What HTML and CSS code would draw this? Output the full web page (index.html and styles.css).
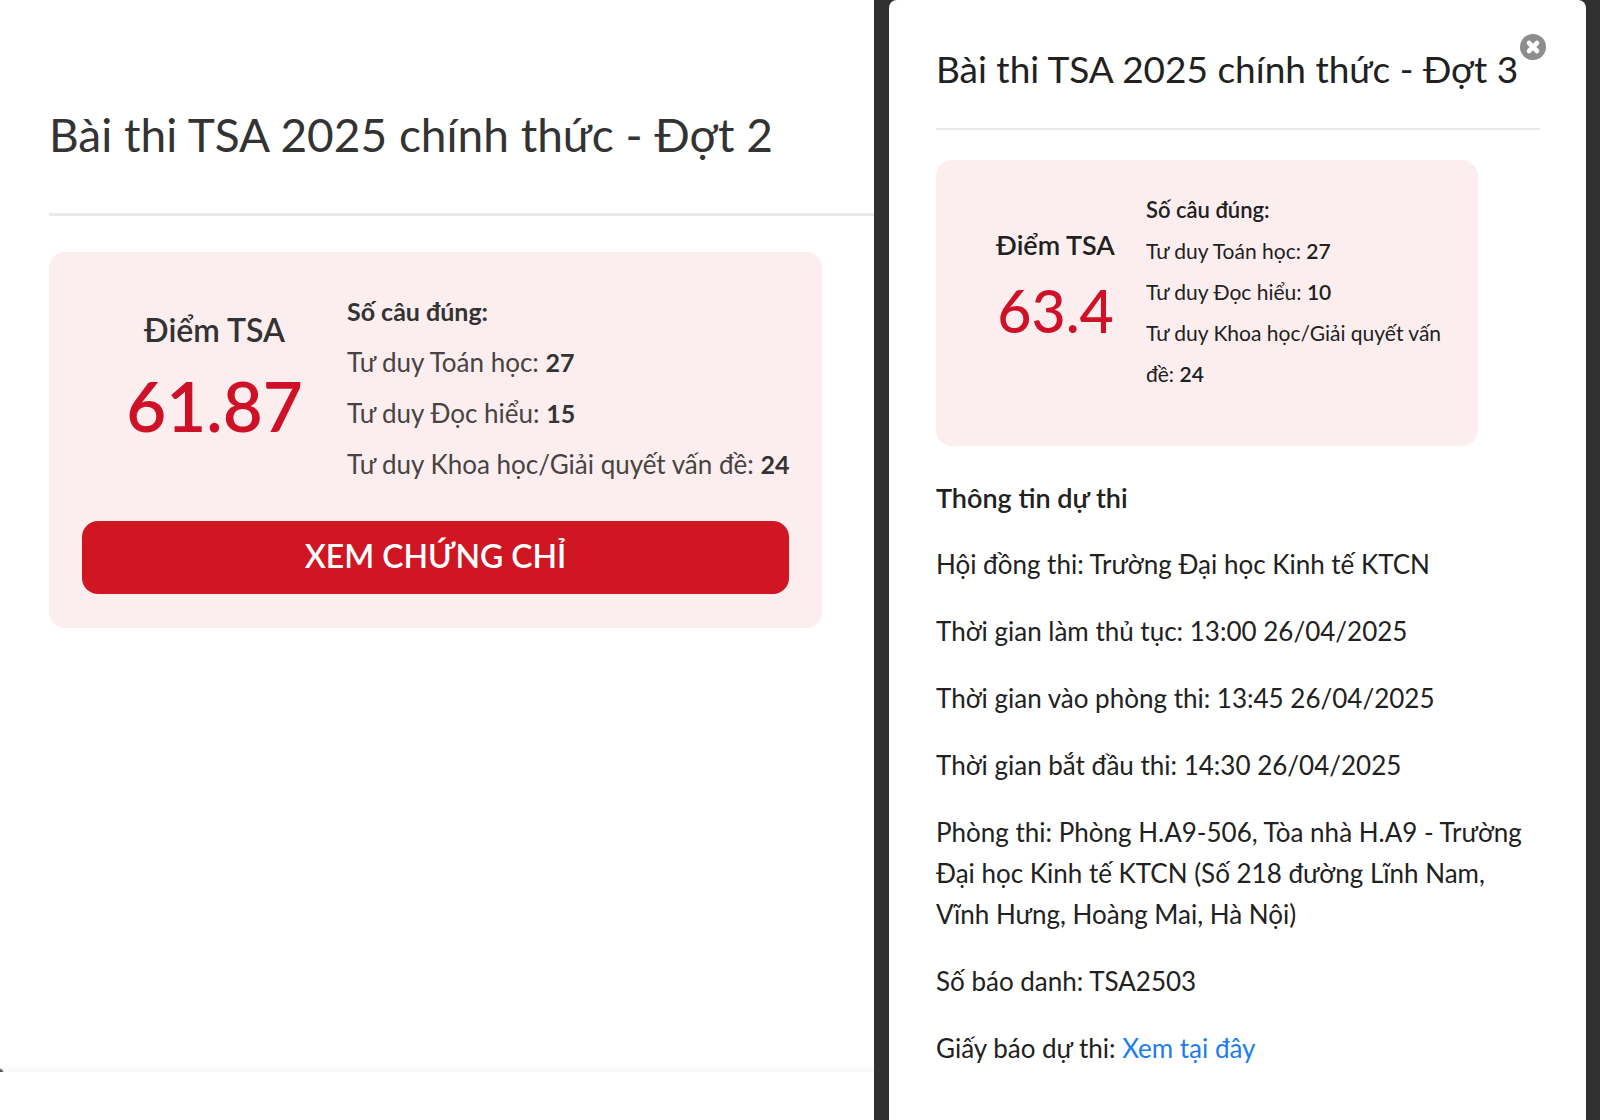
FILE: index.html
```html
<!DOCTYPE html>
<html lang="vi">
<head>
<meta charset="utf-8">
<meta name="viewport" content="width=device-width, initial-scale=1">
<title>Kết quả bài thi TSA 2025</title>
<link rel="stylesheet" href="styles.css">
</head>
<body>
<main class="compare">
  <section class="result result-large">
    <div class="sheet">
      <h1 class="title">Bài thi TSA 2025 chính thức - Đợt 2</h1>
      <div class="score-card">
        <div class="score-row">
          <div class="total">
            <p class="total-label">Điểm TSA</p>
            <p class="total-value">61.87</p>
          </div>
          <ul class="answers">
            <li class="answers-head">Số câu đúng:</li>
            <li>Tư duy Toán học: <b>27</b></li>
            <li>Tư duy Đọc hiểu: <b>15</b></li>
            <li>Tư duy Khoa học/Giải quyết vấn đề: <b>24</b></li>
          </ul>
        </div>
        <button class="certificate" type="button">XEM CHỨNG CHỈ</button>
      </div>
    </div>
  </section>
  <section class="result result-modal">
    <div class="modal">
      <button class="close" type="button" aria-label="Đóng">
        <svg viewBox="0 0 26 26" width="26" height="26" aria-hidden="true">
          <circle cx="13" cy="13" r="13" fill="#8d8d8d"/>
          <path d="M9 9l8 8M17 9l-8 8" stroke="#fff" stroke-width="4.6" stroke-linecap="round"/>
        </svg>
      </button>
      <h1 class="title">Bài thi TSA 2025 chính thức - Đợt 3</h1>
      <div class="score-card">
        <div class="score-row">
          <div class="total">
            <p class="total-label">Điểm TSA</p>
            <p class="total-value">63.4</p>
          </div>
          <ul class="answers">
            <li class="answers-head">Số câu đúng:</li>
            <li>Tư duy Toán học: <b>27</b></li>
            <li>Tư duy Đọc hiểu: <b>10</b></li>
            <li>Tư duy Khoa học/Giải quyết vấn đề: <b>24</b></li>
          </ul>
        </div>
      </div>
      <div class="info">
        <h2 class="info-title">Thông tin dự thi</h2>
        <p>Hội đồng thi: Trường Đại học Kinh tế KTCN</p>
        <p>Thời gian làm thủ tục: 13:00 26/04/2025</p>
        <p>Thời gian vào phòng thi: 13:45 26/04/2025</p>
        <p>Thời gian bắt đầu thi: 14:30 26/04/2025</p>
        <p>Phòng thi: Phòng H.A9-506, Tòa nhà H.A9 - Trường Đại học Kinh tế KTCN (Số 218 đường Lĩnh Nam, Vĩnh Hưng, Hoàng Mai, Hà Nội)</p>
        <p>Số báo danh: TSA2503</p>
        <p>Giấy báo dự thi: <a href="#giay-bao">Xem tại đây</a></p>
      </div>
    </div>
  </section>
</main>
</body>
</html>
```
FILE: styles.css
```css
* {
  box-sizing: border-box;
}

body {
  margin: 0;
  background: #fff;
  color: #212121;
  font-family: Lato, "Open Sans", sans-serif;
}

h1, h2, p, ul {
  margin: 0;
  padding: 0;
}

ul {
  list-style: none;
}

.compare {
  display: grid;
  grid-template-columns: 874fr 726fr;
  min-height: 100vh;
}

.result {
  display: flex;
  min-width: 0;
}

.title {
  font-weight: 400;
  border-bottom: 2px solid #e9e9e9;
}

.score-card {
  background: #fceeee;
  border-radius: 16px;
}

.score-row {
  display: flex;
}

.total {
  flex: none;
  text-align: center;
}

.total-label {
  font-weight: 600;
}

.total-value {
  color: #ce1126;
  font-weight: 500;
}

.answers {
  min-width: 0;
}

.answers-head,
.answers b {
  font-weight: 600;
}

/* Large result sheet */
.result-large {
  padding-bottom: 48px;
}

.result-large .sheet {
  flex: 1;
  min-width: 0;
  padding: 96px 0 0 49px;
  color: #333;
  background:
    radial-gradient(circle at 0 100%, #555 0 2px, transparent 4px),
    linear-gradient(#fff, #f8f8f8) bottom / 100% 8px no-repeat;
}

.result-large .title {
  padding-bottom: 40px;
  border-bottom-width: 3px;
  font-size: 46px;
  line-height: 77px;
}

.result-large .score-card {
  margin: 36px 52px 0 0;
  padding: 34px 33px;
}

.result-large .total {
  width: 265px;
  padding-top: 20px;
}

.result-large .total-label {
  font-size: 32px;
  line-height: 48px;
}

.result-large .total-value {
  font-size: 69px;
  line-height: 104px;
  font-weight: 600;
}

.result-large .answers {
  font-size: 26px;
  line-height: 51px;
  color: #484343;
  white-space: nowrap;
}

.result-large .answers-head,
.result-large .answers b {
  color: #333;
  font-size: 25px;
  font-weight: 700;
}

.certificate {
  display: block;
  width: 100%;
  margin-top: 31px;
  padding: 0 0 4px;
  border: 0;
  border-radius: 16px;
  background: #cf1622;
  color: #fff;
  font-family: inherit;
  font-size: 32px;
  font-weight: 600;
  line-height: 69px;
}

/* Modal over the dark page */
.result-modal {
  padding: 0 14px 0 15px;
  background: #303030;
}

.modal {
  position: relative;
  flex: 1;
  min-width: 0;
  padding: 39px 46px 40px 47px;
  border-radius: 8px 8px 0 0;
  background: #fff;
}

.close {
  position: absolute;
  top: 34px;
  right: 40px;
  padding: 0;
  border: 0;
  background: none;
}

.close svg {
  display: block;
}

.result-modal .title {
  padding-bottom: 29px;
  font-size: 37px;
  line-height: 60px;
}

.result-modal .score-card {
  margin: 30px 62px 0 0;
  padding: 29px 30px 52px 29px;
}

.result-modal .total {
  width: 181px;
  padding-top: 32px;
}

.result-modal .total-label {
  font-size: 27px;
  line-height: 48px;
}

.result-modal .total-value {
  font-size: 59px;
  line-height: 84px;
}

.result-modal .answers {
  font-size: 21px;
  line-height: 41px;
}

.result-modal .answers-head {
  font-size: 22px;
}

.info {
  display: grid;
  gap: 26px;
  margin-top: 31px;
  font-size: 26px;
  line-height: 41px;
}

.info-title {
  font-size: 27px;
  font-weight: 600;
  line-height: 41px;
}

.info a {
  color: #1a7df0;
  text-decoration: none;
}
```
